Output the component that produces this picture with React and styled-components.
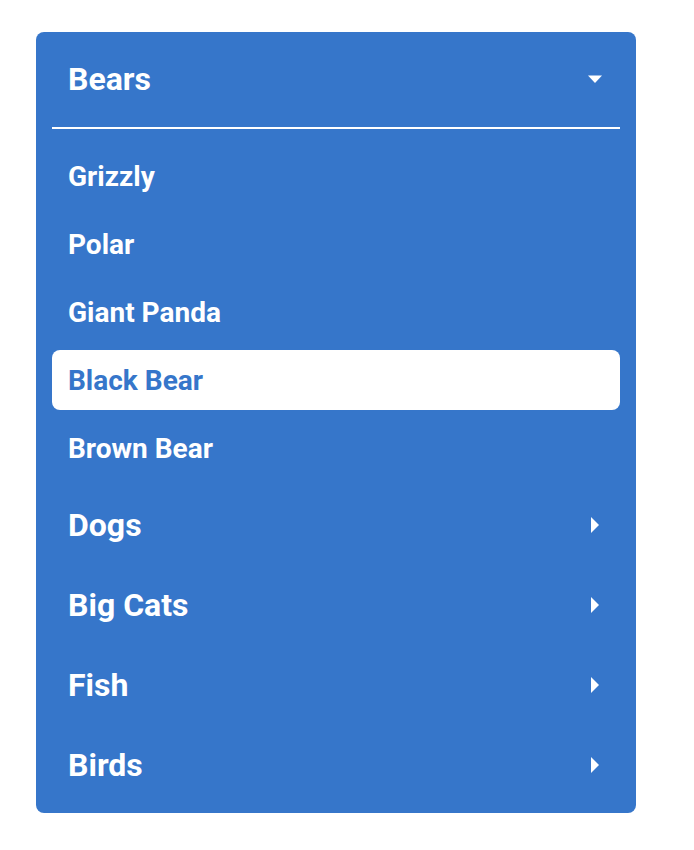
import React from 'react'
import styled, { createGlobalStyle } from 'styled-components'

const GlobalStyle = createGlobalStyle`
  body {
    margin: 0;
    background: #ffffff;
    font-family: Roboto, "Liberation Sans", sans-serif;
  }
`

const Page = styled.div`
  padding: 32px 58px 0 36px;
`

const Panel = styled.nav`
  width: 600px;
  box-sizing: border-box;
  background: #3676ca;
  border-radius: 8px;
  padding: 7px 16px 8px;
  display: flex;
  flex-direction: column;
`

const Row = styled.div`
  height: 80px;
  display: flex;
  align-items: center;
  justify-content: space-between;
  padding: 0 16px;
  color: #ffffff;
  font-size: 32px;
  font-weight: 700;
  cursor: pointer;
`

const Divider = styled.div`
  height: 2px;
  background: #ffffff;
  margin-top: 8px;
`

const List = styled.ul`
  list-style: none;
  margin: 17px 0 7px;
  padding: 0;
  display: flex;
  flex-direction: column;
  gap: 8px;
`

const Item = styled.li`
  height: 60px;
  display: flex;
  align-items: center;
  padding: 0 16px;
  border-radius: 8px;
  font-size: 28px;
  font-weight: 700;
  color: ${p => (p.active ? '#3676ca' : '#ffffff')};
  background: ${p => (p.active ? '#ffffff' : 'transparent')};
  cursor: pointer;
`

const CaretBox = styled.span`
  width: 16px;
  height: 16px;
  display: flex;
  align-items: center;
  justify-content: center;
  margin-right: 1px;
`

const Caret = ({ dir }) => (
  <CaretBox>
    {dir === 'down' ? (
      <svg width="16" height="16" viewBox="0 0 16 16">
        <path d="M1 4.5 L15 4.5 L8 12 Z" fill="#fff" />
      </svg>
    ) : (
      <svg width="16" height="16" viewBox="0 0 16 16">
        <path d="M4 0 L12 8 L4 16 Z" fill="#fff" />
      </svg>
    )}
  </CaretBox>
)

const bears = ['Grizzly', 'Polar', 'Giant Panda', 'Black Bear', 'Brown Bear']
const others = ['Dogs', 'Big Cats', 'Fish', 'Birds']

const App = () => {
  return (
    <>
      <GlobalStyle />
      <Page>
        <Panel>
          <Row>
            Bears
            <Caret dir="down" />
          </Row>
          <Divider />
          <List>
            {bears.map(b => (
              <Item key={b} active={b === 'Black Bear'}>{b}</Item>
            ))}
          </List>
          {others.map(o => (
            <Row key={o}>
              {o}
              <Caret dir="right" />
            </Row>
          ))}
        </Panel>
      </Page>
    </>
  )
}

export default App
